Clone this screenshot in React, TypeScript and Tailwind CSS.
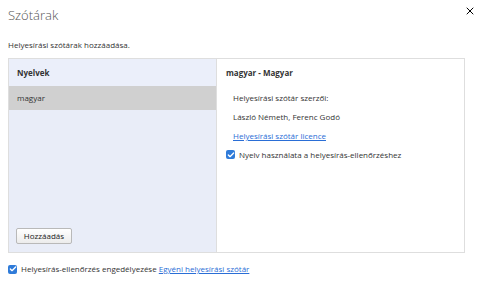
import { Check, X } from 'lucide-react';

const Checkbox = () => (
  <span className="inline-flex h-[9px] w-[9px] shrink-0 items-center justify-center rounded-[2px] bg-[#2f7bd9]">
    <Check className="h-[8px] w-[8px] text-white" strokeWidth={4} />
  </span>
);

export default function App() {
  return (
    <div className="relative h-[288px] w-[480px] bg-white px-2 text-[8px] text-[#333] [font-family:'Open_Sans',sans-serif]">
      <button className="absolute right-[4px] top-[5px] text-black">
        <X className="h-[12px] w-[12px]" strokeWidth={2} />
      </button>

      <div className="h-[38px] pt-[6px] text-[13px] font-light leading-[18px] text-[#555]">Szótárak</div>
      <div className="h-[20px] leading-[14px]">Helyesírási szótárak hozzáadása.</div>

      <div className="flex h-[195px] w-[457px] border border-[#dedede]">
        <div className="flex w-[208px] flex-col border-r border-[#dedede] bg-[#e9edf8]">
          <div className="flex h-[27px] items-center bg-[#ebeffa] px-[8px] font-bold">Nyelvek</div>
          <div className="flex h-[24px] items-center bg-[#d0d0d0] px-[8px]">magyar</div>
          <div className="flex-1" />
          <div className="px-[7px] pb-[8px]">
            <button className="h-[16px] w-[56px] rounded-[2px] border border-[#b9b9b9] bg-gradient-to-b from-white to-[#ececec] leading-[14px] text-[#222]">
              Hozzáadás
            </button>
          </div>
        </div>

        <div className="flex-1 bg-white pl-[9px] pt-[5px]">
          <div className="h-[24px] leading-[18px] font-bold">magyar - Magyar</div>
          <div className="flex flex-col pl-[7px] leading-[19px]">
            <span>Helyesírási szótár szerzői:</span>
            <span>László Németh, Ferenc Godó</span>
            <a className="text-[#2a6ed6] underline">Helyesírási szótár licence</a>
          </div>
          <div className="flex h-[19px] items-center gap-[4px]">
            <Checkbox />
            <span>Nyelv használata a helyesírás-ellenőrzéshez</span>
          </div>
        </div>
      </div>

      <div className="mt-[9px] flex items-center gap-[4px] leading-[14px]">
        <Checkbox />
        <span>
          Helyesírás-ellenőrzés engedélyezése{' '}
          <a className="text-[#2a6ed6] underline">Egyéni helyesírási szótár</a>
        </span>
      </div>
    </div>
  );
}
